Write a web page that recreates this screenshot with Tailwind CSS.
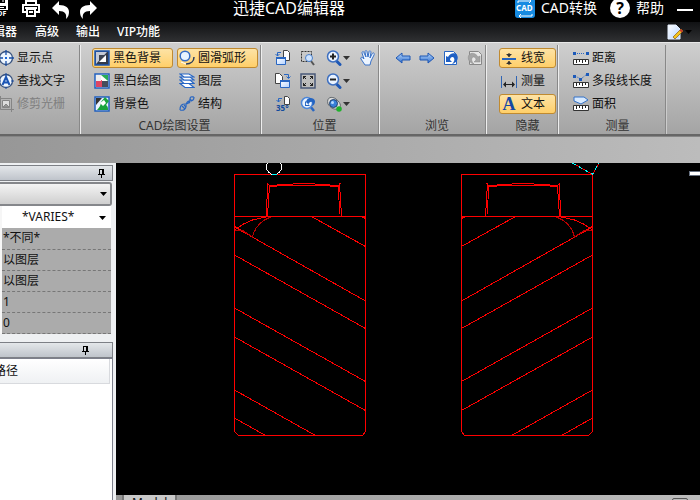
<!DOCTYPE html>
<html lang="zh-CN">
<head>
  <meta charset="UTF-8" />
  <meta name="viewport" content="width=device-width, initial-scale=1" />
  <title>迅捷CAD编辑器</title>
  <script src="https://cdn.jsdelivr.net/npm/@tailwindcss/browser@4"></script>
</head>
<body class="h-screen flex flex-col overflow-hidden bg-[#ababab] font-['Noto_Sans','Noto_Sans_CJK_SC',sans-serif] text-xs leading-5 text-[#111] whitespace-nowrap">

  <!-- 共用图标 -->
  <svg class="absolute w-0 h-0" aria-hidden="true">
    <defs>
      <linearGradient id="blue" x1="0" y1="0" x2="0" y2="1"><stop offset="0" stop-color="#b4d5fb"/><stop offset="1" stop-color="#3572cf"/></linearGradient>
      <linearGradient id="paper" x1="0" y1="0" x2="1" y2="1"><stop offset="0" stop-color="#fff"/><stop offset="1" stop-color="#b4d2ff"/></linearGradient>
    </defs>
    <symbol id="ruler" viewBox="0 0 16 16">
      <path d="M.5 9.500h15v5H.5z" fill="#fff" stroke="#333"/>
      <path d="M3.500 10v3M6.500 10v2M9.500 10v3M12.500 10v2" stroke="#222"/>
    </symbol>
    <symbol id="lens" viewBox="0 0 16 16">
      <path d="M10 10.500l4 4" stroke="#1d57b5" stroke-width="3" stroke-linecap="round"/>
      <circle cx="7" cy="6.500" r="5.500" fill="#eaf3ff" stroke="#3d6fc0" stroke-width="1.500"/>
    </symbol>
    <symbol id="pin" viewBox="0 0 8 10">
      <path d="M2.500 1v5M2 1.500h4M1 6.500h7M4.500 7v3" stroke="#000" fill="none"/>
      <path d="M5 1h2v5H5z" fill="#000"/>
    </symbol>
    <symbol id="down" viewBox="0 0 7 4"><path d="M0 0h7L3.500 4z"/></symbol>
  </svg>

  <!-- 标题栏 -->
  <header class="h-[22px] pb-[7px] shrink-0 flex items-center bg-black text-white leading-4">
    <div class="w-[233px] flex items-center">
      <button type="button" aria-label="PDF" class="-ml-2.5 mr-3">
        <svg class="block w-5 h-5" viewBox="0 0 20 20"><path d="M1 1h17v11H1z" fill="#fff"/><path d="M4 0h11v5H4zM5 8h11v3H5z" fill="#000"/><path d="M13 1v3M7 9.500h7" stroke="#fff"/><text x="3" y="18" font-size="7" font-weight="bold" fill="#fff">PDF</text></svg>
      </button>
      <button type="button" aria-label="打印">
        <svg class="block w-[18px] h-[18px]" viewBox="0 0 18 18" fill="none" stroke="#fff" stroke-width="2"><path d="M4 6V2h10v4M4 13H1V6h16v7h-3"/><path d="M5 10h8v7H5z"/><path d="M3 9h12M7 13h4"/></svg>
      </button>
      <button type="button" aria-label="撤销" class="ml-3 mt-1">
        <svg class="block w-[18px] h-[18px]" viewBox="0 0 18 18" fill="#fff"><path d="M0 7l7-7v4c7 0 10 3 10 7 0 3-1 5-3 7 1-5-1-8-7-8v4z"/></svg>
      </button>
      <button type="button" aria-label="重做" class="ml-2.5 mt-1">
        <svg class="block w-[18px] h-[18px]" viewBox="0 0 18 18" fill="#fff"><path d="M17 7l-7-7v4C3 4 0 7 0 11c0 3 1 5 3 7-1-5 1-8 7-8v4z"/></svg>
      </button>
    </div>
    <h1 class="text-base/4">迅捷CAD编辑器</h1>
    <div class="ml-auto flex items-center pr-[7px] text-sm/4">
      <button type="button" class="flex items-center gap-1.5">
        <svg class="w-5 h-5" viewBox="0 0 20 20"><rect width="20" height="20" rx="3" fill="#168be2"/><path d="M3 5V3h13M14 1l2 2-2 2M17 16v2H4M6 16l-2 2 2 2" stroke="#fff" fill="none"/><text x="1" y="13" font-size="8" font-weight="bold" fill="#fff">CAD</text></svg>
        CAD转换
      </button>
      <button type="button" class="ml-[13px] flex items-center gap-1.5">
        <span class="w-5 h-5 rounded-full bg-white text-black text-base/5 font-bold text-center">?</span>
        帮助
      </button>
      <button type="button" aria-label="最小化" class="ml-[13px] mt-1 w-4 h-0.5 bg-white"></button>
    </div>
  </header>

  <!-- 菜单 -->
  <nav class="h-5 shrink-0 flex items-center bg-linear-to-b from-[#111214] to-[#303133] text-white font-medium">
    <a href="#" class="-ml-[19px] mr-[18px]">编辑器</a>
    <a href="#" class="mr-[17px]">高级</a>
    <a href="#" class="mr-[17px]">输出</a>
    <a href="#">VIP功能</a>
    <button type="button" aria-label="样式" class="ml-auto mr-2 flex items-center gap-0.5">
      <svg class="w-4 h-4" viewBox="0 0 16 16"><path d="M1 1h8l4 4v10H1z" fill="url(#paper)" stroke="#e6f0ff"/><path d="M6 13l8-8 2 2-8 8z" fill="#f5c41d" stroke="#8a5b12" stroke-width=".7"/><path d="M12.500 6.500l2 2L16 7l-2-2z" fill="#c63b2b"/></svg>
      <svg class="w-[7px] h-1"><use href="#down"/></svg>
    </button>
  </nav>

  <!-- 功能区 -->
  <section class="h-[94px] shrink-0 flex pt-0.5 border-t border-b-2 border-t-[#e8e8e8] border-b-[#666] bg-linear-to-b from-[#cfcfcf] to-[#a4a4a4]">
    <div class="w-[81px] shrink-0 flex flex-col gap-[3px] pt-[3px] border-r border-[#eee] shadow-[inset_-1px_0_#888]">
      <button type="button" class="-ml-0.5 h-5 flex items-center gap-[3px]">
        <svg class="w-4 h-4" viewBox="0 0 16 16"><circle cx="8" cy="8" r="6.500" fill="#eef6ff" stroke="#36517e" stroke-width="1.300"/><path d="M8 0v5M8 11v5M0 8h5M11 8h5" stroke="#1a4fa6" stroke-width="1.300"/><path d="M7 7h2v2H7z" fill="#1966d8"/></svg>
        显示点
      </button>
      <button type="button" class="-ml-0.5 h-5 flex items-center gap-[3px]">
        <svg class="w-4 h-4" viewBox="0 0 16 16"><circle cx="8" cy="8" r="6.500" fill="#eef6ff" stroke="#36517e" stroke-width="1.300"/><path d="M8 0v3M0 8h3M13 8h3M8 14v2" stroke="#1a4fa6"/><path d="M4.500 12L8 4l3.500 8M6 9.500h4" stroke="#1b55b5" stroke-width="2" fill="none"/></svg>
        查找文字
      </button>
      <button type="button" disabled class="-ml-0.5 h-5 flex items-center gap-[3px] text-[#808080]">
        <svg class="w-4 h-4" viewBox="0 0 16 16" fill="none" stroke="#858585"><path d="M2.500 0v13.500H16M0 2.500h13.500V16"/><path d="M4.500 4.500h7v7h-7z" fill="#ddd"/><path d="M5 11l3-3 3 3z" fill="#999"/></svg>
        修剪光栅
      </button>
    </div>

    <div class="w-[181px] shrink-0 pt-[3px] pl-[11px] border-r border-[#eee] shadow-[inset_-1px_0_#888]">
      <div class="grid grid-cols-[81px_81px] gap-x-1 gap-y-[3px]">
        <button type="button" aria-pressed="true" class="h-5 flex items-center gap-[3px] pl-px border border-[#c08a30] rounded-[3px] bg-linear-to-b from-[#fde3a5] to-[#ffcf68]">
          <svg class="w-4 h-4" viewBox="0 0 16 16"><path d="M1 1h14v14H1z" fill="#333b4b" stroke="#1d58b8" stroke-width="1.500"/><path d="M2 2h11L2 14z" fill="#c5cad6"/><path d="M5 5h7v7H5z" fill="#3d4453"/><path d="M12 5v7H5z" fill="#fff"/></svg>
          黑色背景
        </button>
        <button type="button" aria-pressed="true" class="h-5 flex items-center gap-[3px] pl-px border border-[#c08a30] rounded-[3px] bg-linear-to-b from-[#fde3a5] to-[#ffcf68]">
          <svg class="w-4 h-4" viewBox="0 0 16 16" fill="none"><circle cx="6" cy="6" r="4.800" fill="#e8f3ff" stroke="#346bc5" stroke-width="1.500"/><path d="M15 7c0 4-3 7-8 7" stroke="#2a3c5e" stroke-width="1.500"/><path d="M2 12l5 2" stroke="#fff"/></svg>
          圆滑弧形
        </button>
        <button type="button" class="h-5 flex items-center gap-[3px] pl-0.5">
          <svg class="w-4 h-4" viewBox="0 0 16 16"><path d="M1 1h14v14H1z" fill="#fff" stroke="#2260be" stroke-width="1.500"/><path d="M7 2h7v6z" fill="#27ac55"/><path d="M2 8l6-1v7H2z" fill="#df4663"/><path d="M8 8h6v6H8z" fill="#454c5c"/><path d="M2 2h5v6H2z" fill="#eee"/></svg>
          黑白绘图
        </button>
        <button type="button" class="h-5 flex items-center gap-[3px] pl-0.5">
          <svg class="w-4 h-4" viewBox="0 0 16 16" fill="#fff" stroke="#2766c5" stroke-width="1.200"><path d="M1 10.500h9l5 4H6z"/><path d="M1 7h10l4 3.500H5z"/><path d="M1 4h10l4 3H5z"/><path d="M1 1h9l5 3H5z"/></svg>
          图层
        </button>
        <button type="button" class="h-5 flex items-center gap-[3px] pl-0.5">
          <svg class="w-4 h-4" viewBox="0 0 16 16"><path d="M1 1h14v14H1z" fill="#eaf3ff" stroke="#2260be" stroke-width="1.500"/><path d="M2 2h6L2 9z" fill="#333"/><path d="M7 6l4-5 4 4-3 4c2 1 2 3 2 5H3c2-2 4-5 4-8z" fill="#19a33b"/><path d="M6 7l4-3 2 3-3 3z" fill="#fff"/></svg>
          背景色
        </button>
        <button type="button" class="h-5 flex items-center gap-[3px] pl-0.5">
          <svg class="w-4 h-4" viewBox="0 0 16 16" fill="none" stroke="#2866c2" stroke-width="1.200"><path d="M1 14c0-5 2-6 5-6s5-2 5-5 2-2 4-2M1 14c4 1 6-1 6-4s1-5 4-5 4-2 4-4"/><path d="M3 10l3 3M5 9l2 2M9 5l2 2M11 3l2 2"/></svg>
          结构
        </button>
      </div>
      <p class="mt-1 pr-1 leading-4 text-center text-[#333]">CAD绘图设置</p>
    </div>

    <div class="w-[118px] shrink-0 pt-[3px] border-r border-[#eee] shadow-[inset_-1px_0_#888]">
      <div class="grid grid-cols-[25px_26px_34px_16px] gap-y-[3px] pl-[13px]">
        <button type="button" aria-label="前一视图" class="h-5">
          <svg class="w-4 h-4" viewBox="0 0 16 16"><path d="M8.500.5h4l2 2v8h-6z" fill="#fff" stroke="#444"/><path d="M1.500 7.500h9v7h-9z" fill="url(#paper)" stroke="#2866c2"/><path d="M1 8h10" stroke="#2866c2" stroke-width="2"/><path d="M6 2.500H2.500V6M.5 4l2 2 2-2" stroke="#2866c2" fill="none"/></svg>
        </button>
        <button type="button" aria-label="窗口缩放" class="h-5">
          <svg class="w-4 h-4" viewBox="0 0 16 16"><path d="M1.500 1.500h10v10h-10z" fill="none" stroke="#333" stroke-dasharray="2 1"/><path d="M11 11l3 4" stroke="#555" stroke-width="2"/><circle cx="9" cy="8" r="3.500" fill="#cfe4ff" stroke="#4b80c9"/></svg>
        </button>
        <button type="button" aria-label="放大" class="h-5 flex items-center gap-px">
          <svg class="w-4 h-4" viewBox="0 0 16 16"><use href="#lens"/><path d="M4 6.500h6M7 3.500v6" stroke="#222" stroke-width="2"/></svg>
          <svg class="w-[7px] h-1 fill-[#333]"><use href="#down"/></svg>
        </button>
        <button type="button" aria-label="平移" class="h-5">
          <svg class="w-4 h-4" viewBox="0 0 16 16"><path d="M5 15L1 9c-1-2 1-2 2-1l1 1-2-6c0-2 2-2 2 0l2 4-1-5c0-2 2-2 2 0l1 5 1-5c0-2 2-1 2 0l-1 6 2-4c1-2 3-1 2 1l-3 6-1 4z" fill="#edf5ff" stroke="#3a72c8"/></svg>
        </button>
        <button type="button" aria-label="后一视图" class="h-5">
          <svg class="w-4 h-4" viewBox="0 0 16 16"><path d="M.5.5h4l3 3v7h-7z" fill="#fff" stroke="#444"/><path d="M5.500 7.500h9v7h-9z" fill="url(#paper)" stroke="#2866c2"/><path d="M5 8h10" stroke="#2866c2" stroke-width="2"/><path d="M9 1.500h4.500V5M11.500 3.500l2 2 2-2" stroke="#2866c2" fill="none"/></svg>
        </button>
        <button type="button" aria-label="全部显示" class="h-5">
          <svg class="w-4 h-4" viewBox="0 0 16 16" fill="none"><path d="M1 1h14v14H1z" stroke="#495979" stroke-width="1.500"/><path d="M3.500 6V3.500H6M10 3.500h2.500V6M12.500 10v2.500H10M6 12.500H3.500V10M3 3l3 3M13 3l-3 3M13 13l-3-3M3 13l3-3" stroke="#222"/></svg>
        </button>
        <button type="button" aria-label="缩小" class="h-5 flex items-center gap-px">
          <svg class="w-4 h-4" viewBox="0 0 16 16"><use href="#lens"/><path d="M4 6.500h6" stroke="#222" stroke-width="2"/></svg>
          <svg class="w-[7px] h-1 fill-[#333]"><use href="#down"/></svg>
        </button>
        <span></span>
        <button type="button" aria-label="旋转35度" class="h-5">
          <svg class="w-4 h-4" viewBox="0 0 16 16"><path d="M9.500.5h3l2 2v6h-5z" fill="#fff" stroke="#444"/><path d="M7 2.500H3.500V6M1.500 4l2 2 2-2" stroke="#2866c2" fill="none"/><text x="1" y="15" font-size="8" font-weight="bold" fill="#124b9d">35°</text></svg>
        </button>
        <button type="button" aria-label="上次缩放" class="h-5">
          <svg class="w-4 h-4" viewBox="0 0 16 16"><path d="M10 10l4 5" stroke="#2866c2" stroke-width="2.500"/><circle cx="7" cy="7" r="5.500" fill="#eaf3ff" stroke="#4c86d8" stroke-width="1.500"/><path d="M5 5v5h5zM6 9c-1-9 8-8 9-4 0 3-1 4-3 5 2-5-2-6-4-1z" fill="#2364c2"/></svg>
        </button>
        <button type="button" aria-label="三维视图" class="h-5 flex items-center gap-px">
          <svg class="w-4 h-4" viewBox="0 0 16 16"><path d="M2 8C0 1 6 0 10 3c6 5 5 8 2 10-5 1-8-2-10-5z" fill="#ddd" stroke="#61676c"/><circle cx="7.500" cy="7.500" r="4" fill="#377fd8" stroke="#26436c"/><circle cx="6.500" cy="6.500" r="1.500" fill="#b8dcff"/><circle cx="13" cy="13" r="2.800" fill="#20b12c"/></svg>
          <svg class="w-[7px] h-1 fill-[#333]"><use href="#down"/></svg>
        </button>
      </div>
      <p class="mt-1 pl-2 leading-4 text-center text-[#333]">位置</p>
    </div>

    <div class="w-[107px] shrink-0 pt-[3px] border-r border-[#eee] shadow-[inset_-1px_0_#888]">
      <div class="flex items-center gap-2 h-5 pl-[15px]">
        <button type="button" aria-label="后退"><svg class="block w-4 h-4" viewBox="0 0 16 16"><path d="M1 8l6-5v3h8v4H7v3z" fill="url(#blue)" stroke="#1d56b4"/></svg></button>
        <button type="button" aria-label="前进"><svg class="block w-4 h-4" viewBox="0 0 16 16"><path d="M15 8L9 3v3H1v4h8v3z" fill="url(#blue)" stroke="#1d56b4"/></svg></button>
        <button type="button" aria-label="还原视图"><svg class="block w-4 h-4" viewBox="0 0 16 16"><path d="M1.500 1.500h9l3 3v10h-12z" fill="#fff" stroke="#2866c2"/><path d="M3 6v6h6L7 10c0-3 3-4 4-2s0 4-2 6c5-1 7-6 5-9s-7-2-9 2z" fill="#1e5fc4"/></svg></button>
        <button type="button" disabled aria-label="恢复视图"><svg class="block w-4 h-4" viewBox="0 0 16 16"><path d="M2.500 1.500h9l3 3v10h-12z" fill="#e7e7e7" stroke="#888"/><path d="M13 6v6H7l2-2c0-3-3-4-4-2s0 4 2 6C2 13 0 8 2 5s7-2 9 2z" fill="#a5a5a5" stroke="#888" stroke-width=".5"/></svg></button>
      </div>
      <p class="mt-[50px] pl-2 leading-4 text-center text-[#333]">浏览</p>
    </div>

    <div class="w-[72px] shrink-0 pt-[3px] pl-3 border-r border-[#eee] shadow-[inset_-1px_0_#888]">
      <div class="w-[57px] flex flex-col gap-[3px]">
        <button type="button" aria-pressed="true" class="h-5 flex items-center gap-1 pl-px border border-[#c08a30] rounded-[3px] bg-linear-to-b from-[#fde3a5] to-[#ffcf68]">
          <svg class="w-4 h-4" viewBox="0 0 16 16"><path d="M1 9h14" stroke="#2463bd" stroke-width="2"/><path d="M8 3v4M8 11v4" stroke="#222"/><path d="M5 4h6L8 7zM5 14h6l-3-3z" fill="#333"/></svg>
          线宽
        </button>
        <button type="button" class="h-5 flex items-center gap-1 pl-0.5">
          <svg class="w-4 h-4" viewBox="0 0 16 16"><path d="M.5 3v12M15.500 3v12" stroke="#2f65b5"/><path d="M3 11.500h10" stroke="#222"/><path d="M5 8.500v6l-3-3zM11 8.500v6l3-3z" fill="#222"/></svg>
          测量
        </button>
        <button type="button" aria-pressed="true" class="h-5 flex items-center gap-1 pl-px border border-[#c08a30] rounded-[3px] bg-linear-to-b from-[#fde3a5] to-[#ffcf68]">
          <span class="w-4 font-['Liberation_Serif',serif] text-lg/4 font-bold text-[#1649a5] text-center">A</span>
          文本
        </button>
        <p class="mt-px leading-4 text-center text-[#333]">隐藏</p>
      </div>
    </div>

    <div class="w-[108px] shrink-0 flex flex-col gap-[3px] pt-[3px] border-r border-[#ccc] shadow-[inset_-1px_0_#888]">
      <button type="button" class="h-5 flex items-center gap-[3px] pl-3.5">
        <svg class="w-4 h-4" viewBox="0 0 16 16"><use href="#ruler"/><path d="M4 3.500h8" stroke="#2866c2" stroke-dasharray="1 1"/><path d="M0 2h3v3H0zM13 2h3v3h-3z" fill="#1d5ab9"/></svg>
        距离
      </button>
      <button type="button" class="h-5 flex items-center gap-[3px] pl-3.5">
        <svg class="w-4 h-4" viewBox="0 0 16 16"><use href="#ruler"/><path d="M2 3l6 3 6-5" stroke="#2866c2" stroke-dasharray="1 1" fill="none"/><path d="M0 2h3v3H0zM6 5h3v3H6zM13 0h3v3h-3z" fill="#1d5ab9"/></svg>
        多段线长度
      </button>
      <button type="button" class="h-5 flex items-center gap-[3px] pl-3.5">
        <svg class="w-4 h-4" viewBox="0 0 16 16"><use href="#ruler"/><path d="M1 1h10l4 3-7 4-7-3z" fill="#d8eaff" stroke="#3473c9"/></svg>
        面积
      </button>
      <p class="mt-px pl-2.5 leading-4 text-center text-[#333]">测量</p>
    </div>
  </section>

  <div class="h-[27px] shrink-0 border-t border-[#858585] bg-linear-to-r from-[#979797] to-[#bcbcbc]"></div>

  <main class="flex-1 min-h-0 flex">
    <!-- 属性面板 -->
    <aside class="w-[116px] shrink-0 flex flex-col pt-0.5 bg-[#eef0f2]">
      <div class="w-[113px] h-4 shrink-0 flex items-center justify-end pr-[7px] border border-l-0 border-[#7d8086] bg-linear-to-b from-[#e4e7ea] to-[#bfc4cb]">
        <svg class="w-2 h-2.5"><use href="#pin"/></svg>
      </div>
      <div class="relative w-28 mt-px">
        <select aria-label="对象" class="block w-full h-6 appearance-none border-2 border-l-0 border-[#85878b] rounded-r-[3px] bg-linear-to-b from-[#f4f4f4] to-[#cfcfcf]"><option></option></select>
        <svg class="absolute right-[5px] top-2.5 w-[7px] h-1 pointer-events-none"><use href="#down"/></svg>
      </div>
      <table class="w-[111px] border-l-2 border-[#f6f6f6] bg-[#ababab] border-collapse">
        <tbody>
          <tr>
            <td class="relative p-0 bg-white">
              <select aria-label="颜色" class="block w-full h-[22px] pl-5 appearance-none bg-white"><option>*VARIES*</option></select>
              <svg class="absolute right-[5px] top-2.5 w-[7px] h-1 pointer-events-none"><use href="#down"/></svg>
            </td>
          </tr>
          <tr class="h-[21px]"><td class="p-0 pl-px border-b border-dashed border-[#777]">*不同*</td></tr>
          <tr class="h-[21px]"><td class="p-0 pl-px border-b border-dashed border-[#777]">以图层</td></tr>
          <tr class="h-[21px]"><td class="p-0 pl-px border-b border-dashed border-[#777]">以图层</td></tr>
          <tr class="h-[21px]"><td class="p-0 pl-px border-b border-dashed border-[#777]">1</td></tr>
          <tr class="h-[21px]"><td class="p-0 pl-px border-b border-dashed border-[#777]">0</td></tr>
        </tbody>
      </table>
      <div class="w-[113px] h-4 mt-2 shrink-0 flex items-center justify-end pr-[23px] border border-l-0 border-[#7d8086] bg-linear-to-b from-[#e4e7ea] to-[#bfc4cb]">
        <svg class="w-2 h-2.5"><use href="#pin"/></svg>
      </div>
      <div class="w-[113px] flex-1 border-t border-r border-[#7d808c] bg-white">
        <div class="mr-0.5 h-[25px] flex items-center border-b border-r border-[#d8dade] bg-linear-to-b from-white to-[#eff1f3]"><span class="-ml-1.5">路径</span></div>
      </div>
    </aside>

    <!-- 绘图区 -->
    <section class="flex-1 min-w-0 flex flex-col">
      <div class="flex-1 min-h-0 bg-black">
        <svg class="block w-full h-full" viewBox="116 163 584 332" preserveAspectRatio="xMinYMin slice" fill="none" stroke="#f00" shape-rendering="crispEdges">
          <g id="bed">
            <path d="M234.500 174.500h131v257l-3 4h-124l-4-4zM234.500 216.500h131"/>
            <path d="M311.500 216.500l54 30M361.500 216.500l4 2M234.500 227l131 74M234.500 255l131 73.500M234.500 308l131 73.500M234.500 337l131 73.500M234.500 390l81 45.500M234.500 418l31 17.500"/>
            <path d="M270 185.500h68M277 184.500h16M315 184.500h15M293 183.500h22M269 186.500h8M330 186.500h8"/>
            <path d="M267.500 183.500l-1 32.500M269.500 186l-2 30M339.500 183.500l2 32.500M338.500 186l1 28M267.500 183.500l3 3M340.500 183.500l-3 3"/>
            <path d="M234.500 230l9-6 9-4 13-3M234.500 226l9 6"/>
            <path d="M234.500 230l9 1 9 6c2-9 8-16 18-20" stroke="#b80000"/>
          </g>
          <use href="#bed" transform="translate(827 0) scale(-1 1)"/>
          <circle cx="274" cy="167" r="7.500" stroke="#fff"/>
          <path d="M271.500 174.500h5" stroke="#0ff"/>
          <path d="M572.500 163l20 11.500L599 163"/>
          <path d="M572.500 163l20 11.500L599 163" stroke="#0ff" stroke-dasharray="4 3"/>
          <path d="M689.500 171.500h12v4h-12z" fill="#fff" stroke="#667080"/>
        </svg>
      </div>
      <div class="h-[5px] shrink-0 flex justify-between pl-1.5 pr-3 overflow-hidden bg-linear-to-r from-[#979797] to-[#bcbcbc]">
        <a href="#" class="h-5 px-2 border-x-2 border-[#777] rounded-b-lg bg-[#c8c8c8] leading-4">Model</a>
        <span class="mt-[3px] w-4 h-4 border border-[#555] rounded-xs"></span>
      </div>
    </section>
  </main>
</body>
</html>
